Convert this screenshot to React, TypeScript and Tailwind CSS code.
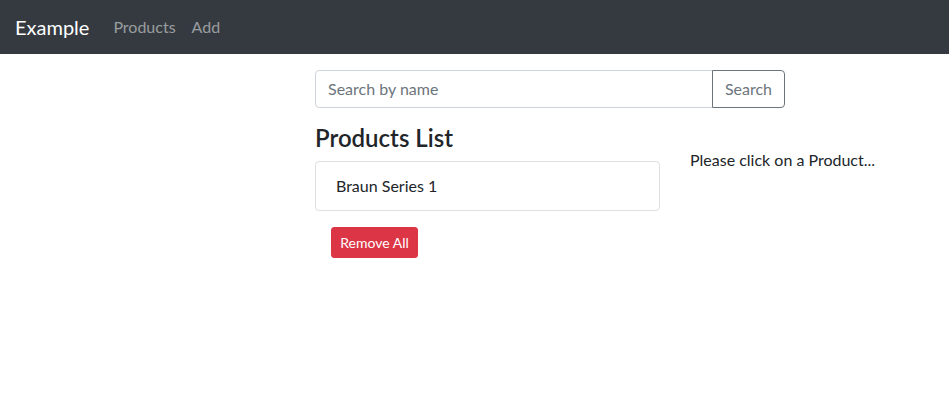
import React, { useState } from 'react';

const products = [{ id: 1, title: 'Braun Series 1' }];

const App: React.FC = () => {
  const [query, setQuery] = useState('');
  const [active, setActive] = useState<number | null>(null);

  return (
    <div className="min-h-screen bg-white text-[#212529] text-base overflow-hidden" style={{ fontFamily: '"Segoe UI", Lato, sans-serif' }}>
      <nav className="flex items-center h-[54px] px-4 bg-[#343a40]">
        <a href="#" className="mr-4 text-xl leading-[30px] text-white -ml-px">Example</a>
        <div className="flex">
          <a href="#" className="px-2 text-white/50">Products</a>
          <a href="#" className="px-2 text-white/50">Add</a>
        </div>
      </nav>

      <div className="mt-4 ml-[300px] w-[750px] flex flex-wrap">
        <div className="w-[500px] px-[15px]">
          <div className="flex mb-4 h-[38px]">
            <input
              value={query}
              onChange={(e) => setQuery(e.target.value)}
              placeholder="Search by name"
              className="flex-1 min-w-0 px-3 border border-[#ced4da] rounded-l-[4px] outline-none placeholder:text-[#6c757d] text-[#495057]"
            />
            <button className="w-[73px] -ml-px border border-[#6c757d] rounded-r-[4px] text-[#6c757d]">Search</button>
          </div>
        </div>

        <div className="w-[375px] px-[15px]">
          <h4 className="text-2xl font-semibold leading-[1.2] mb-2">Products List</h4>
          <ul className="border border-black/[0.125] rounded-[4px]">
            {products.map((p) => (
              <li
                key={p.id}
                onClick={() => setActive(p.id)}
                className={`px-5 py-3 leading-6 cursor-pointer ${active === p.id ? 'bg-[#007bff] text-white' : ''}`}
              >
                {p.title}
              </li>
            ))}
          </ul>
          <button className="m-4 w-[87px] py-1 text-sm leading-[21px] bg-[#dc3545] border border-[#dc3545] text-white rounded-[3px]">Remove All</button>
        </div>

        <div className="w-[375px] px-[15px]">
          <div className="h-6" />
          <p className="leading-6">Please click on a Product...</p>
        </div>
      </div>
    </div>
  );
};

export default App;
